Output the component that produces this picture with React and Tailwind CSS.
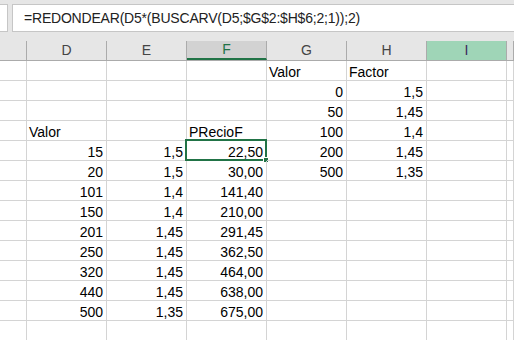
const cols = ["C", "D", "E", "F", "G", "H", "I", "J"];
const widths = ["w-[27px]", "w-[80px]", "w-[80px]", "w-[80px]", "w-[80px]", "w-[80px]", "w-[80px]", "w-[7px]"];

// [D, E, F, G, H] ; strings are left aligned text, numbers right aligned
const rows = [
  [null, null, null, { t: "Valor" }, { t: "Factor" }],
  [null, null, null, "0", "1,5"],
  [null, null, null, "50", "1,45"],
  [{ t: "Valor" }, null, { t: "PRecioF" }, "100", "1,4"],
  ["15", "1,5", "22,50", "200", "1,45"],
  ["20", "1,5", "30,00", "500", "1,35"],
  ["101", "1,4", "141,40", null, null],
  ["150", "1,4", "210,00", null, null],
  ["201", "1,45", "291,45", null, null],
  ["250", "1,45", "362,50", null, null],
  ["320", "1,45", "464,00", null, null],
  ["440", "1,45", "638,00", null, null],
  ["500", "1,35", "675,00", null, null],
  [null, null, null, null, null],
];

function Cell({ v, w, selected }) {
  let content = null;
  if (v && typeof v === "object") {
    content = <span className="pl-[2px]">{v.t}</span>;
  } else if (v) {
    content = <span className="ml-auto pr-[3px]">{v}</span>;
  }
  return (
    <div className={`${w} shrink-0 h-[20px] border-r border-b border-[#d4d4d4] flex items-end leading-[16px] relative`}>
      {content}
      {selected && (
        <div className="absolute -left-[2px] -top-[2px] -right-[1px] -bottom-[1px] border-2 border-[#217346]">
          <div className="absolute -right-[4px] -bottom-[4px] w-[6px] h-[6px] bg-[#217346] border border-white" />
        </div>
      )}
    </div>
  );
}

export default function App() {
  return (
    <div className="w-[514px] h-[340px] overflow-hidden bg-white text-[14px] text-black" style={{ fontFamily: '"Liberation Sans", Arial, sans-serif' }}>
      <div className="bg-[#e6e6e6] h-[41px] pt-[4px] flex gap-[4px]">
        <div className="w-[8px] h-[28px] bg-white border border-l-0 border-[#c6c6c6] shrink-0" />
        <div className="flex-1 h-[28px] bg-white border border-r-0 border-[#c6c6c6] flex items-center pl-[10px] text-[#222]">
          <span className="pl-[1px] tracking-[-0.2px]">=REDONDEAR(D5*(BUSCARV(D5;$G$2:$H$6;2;1));2)</span>
        </div>
      </div>
      <div className="flex h-[20px] bg-[#e6e6e6] border-b border-[#ababab] text-[#444]">
        {cols.map((c, i) => {
          const sel = c === "F";
          const hi = c === "I";
          return (
            <div
              key={c}
              className={`${widths[i]} shrink-0 flex items-center justify-center border-r border-[#ababab] ${sel ? "bg-[#d2d2d2] border-b-2 border-b-[#217346] text-[#217346]" : ""} ${hi ? "bg-[#9fd5b7] text-[#3a2a5c]" : ""}`}
            >
              {c === "C" || c === "J" ? "" : c}
            </div>
          );
        })}
      </div>
      {rows.map((r, ri) => (
        <div key={ri} className="flex">
          <Cell w={widths[0]} />
          {r.map((v, ci) => (
            <Cell key={ci} v={v} w={widths[ci + 1]} selected={ri === 4 && ci === 2} />
          ))}
          <Cell w={widths[6]} />
          <Cell w={widths[7]} />
        </div>
      ))}
    </div>
  );
}
